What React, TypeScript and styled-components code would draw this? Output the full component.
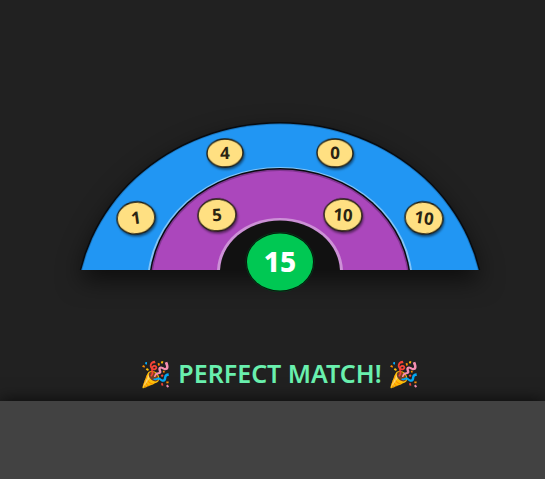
import React from "react";
import styled, { createGlobalStyle } from "styled-components";

const GlobalStyle = createGlobalStyle`
  * { box-sizing: border-box; }
  body {
    margin: 0;
    background: #424242;
    font-family: "Noto Sans", "Open Sans", sans-serif;
  }
`;

const Page = styled.div`
  display: flex;
  flex-direction: column;
  min-height: 100vh;
`;

const Stage = styled.main`
  display: flex;
  flex-direction: column;
  align-items: center;
  gap: 16px;
  padding: 0 0 12px 15px;
  background: #212121;
`;

const Dial = styled.svg`
  display: block;
  width: 100%;
  max-width: 530px;
`;

const DialShape = styled.g`
  filter: drop-shadow(0 10px 12px rgba(0, 0, 0, 0.6));
`;

const TokenShape = styled.g`
  filter: drop-shadow(1px 2px 1px rgba(0, 0, 0, 0.5));
`;

const TokenLabel = styled.text`
  font-size: 17px;
  font-weight: 700;
  fill: #2a2412;
  text-anchor: middle;
`;

const TotalLabel = styled.text`
  font-size: 28px;
  font-weight: 800;
  fill: #ffffff;
  text-anchor: middle;
`;

const Message = styled.h1`
  margin: 0;
  color: #69f0ae;
  font-family: "Noto Sans", "Noto Color Emoji", sans-serif;
  font-size: 25px;
  font-weight: 600;
  line-height: 32px;
  white-space: nowrap;
`;

const Tray = styled.footer`
  flex: 1;
  min-height: 78px;
  background: #424242;
  box-shadow: 0 0 16px rgba(0, 0, 0, 0.75);
`;

interface TokenData {
  value: number;
  x: number;
  y: number;
  rx: number;
  ry: number;
  angle: number;
}

const tokens: TokenData[] = [
  { value: 1, x: 136, y: 218, rx: 19, ry: 16, angle: -8 },
  { value: 4, x: 225, y: 153, rx: 18, ry: 14, angle: -2 },
  { value: 0, x: 335, y: 153, rx: 18, ry: 14, angle: 2 },
  { value: 10, x: 424, y: 218, rx: 19, ry: 16, angle: 8 },
  { value: 5, x: 217, y: 215, rx: 19, ry: 16, angle: -4 },
  { value: 10, x: 343, y: 215, rx: 19, ry: 16, angle: 4 },
];

function Token({ value, x, y, rx, ry, angle }: TokenData) {
  return (
    <g transform={`translate(${x} ${y}) rotate(${angle})`}>
      <TokenShape>
        <ellipse rx={rx} ry={ry} fill="#ffe082" stroke="#1c180c" strokeWidth="1.3" />
      </TokenShape>
      <TokenLabel y="6">{value}</TokenLabel>
    </g>
  );
}

export default function App() {
  return (
    <Page>
      <GlobalStyle />
      <Stage>
        <Dial viewBox="15 0 530 341" role="img" aria-label="Number wheel, total 15">
          <defs>
            <clipPath id="upper-half">
              <rect x="60" y="100" width="440" height="170" />
            </clipPath>
          </defs>
          <DialShape>
            <g clipPath="url(#upper-half)">
              <ellipse cx="280" cy="310" rx="205" ry="188" fill="#070b10" />
              <ellipse cx="280" cy="310" rx="203.5" ry="186.5" fill="#1b78c2" />
              <ellipse cx="280" cy="310" rx="202.5" ry="185.5" fill="#2196f3" />
              <ellipse cx="280" cy="285" rx="133" ry="118" fill="#82c4f8" />
              <ellipse cx="280" cy="285" rx="131" ry="117" fill="#090b10" />
              <ellipse cx="280" cy="285" rx="129.5" ry="115.5" fill="#813691" />
              <ellipse cx="280" cy="285" rx="128" ry="114" fill="#ab47bc" />
              <ellipse cx="280" cy="272" rx="63" ry="54" fill="#cd91d7" />
              <ellipse cx="280" cy="272" rx="60" ry="51.5" fill="#111111" />
            </g>
          </DialShape>
          {tokens.map((token) => (
            <Token key={`${token.x}-${token.y}`} {...token} />
          ))}
          <ellipse cx="280" cy="262" rx="34.5" ry="30" fill="#06401d" />
          <ellipse cx="280" cy="262" rx="34" ry="29.5" fill="#06180c" />
          <ellipse cx="280" cy="262" rx="33" ry="28.5" fill="#00c853" />
          <TotalLabel x="280" y="272">15</TotalLabel>
        </Dial>
        <Message>🎉 PERFECT MATCH! 🎉</Message>
      </Stage>
      <Tray />
    </Page>
  );
}
